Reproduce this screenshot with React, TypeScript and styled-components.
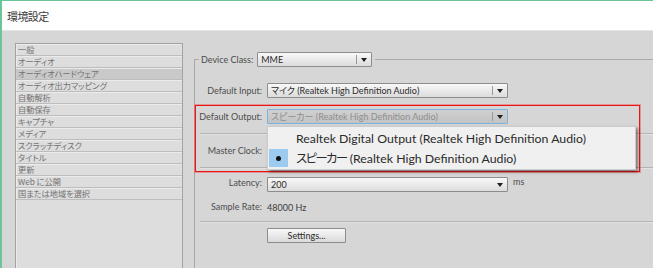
import * as React from "react"
import styled, {createGlobalStyle} from "styled-components"

const GlobalStyles = createGlobalStyle`
  html, body {
    margin: 0;
    padding: 0;
    background: #d6d6d6;
  }
  body {
    font-family: 'Lato', 'Noto Sans CJK JP', sans-serif;
    font-feature-settings: "palt";
  }
`

const sections = [
    "一般",
    "オーディオ",
    "オーディオハードウェア",
    "オーディオ出力マッピング",
    "自動解析",
    "自動保存",
    "キャプチャ",
    "メディア",
    "スクラッチディスク",
    "タイトル",
    "更新",
    "Web に公開",
    "国または地域を選択",
]

export default function App() {
    return (
        <>
            <GlobalStyles/>
            <Window>
                <TitleBar>環境設定</TitleBar>
                <Body>
                    <ListPanel>
                        {sections.map(s => (
                            <ListItem key={s} $selected={s === "オーディオハードウェア"}>{s}</ListItem>
                        ))}
                    </ListPanel>
                    <Group>
                        <Legend>
                            <Label>Device Class:</Label>
                            <Select $width={115} $divider>MME</Select>
                        </Legend>
                        <GroupBody>
                            <Row $top={16}>
                                <Label>Default Input:</Label>
                                <Select $width={241} $divider>マイク (Realtek High Definition Audio)</Select>
                            </Row>
                            <Row $top={11}>
                                <Label>Default Output:</Label>
                                <Anchor>
                                    <Select $width={241} $divider $focused>スピーカー (Realtek High Definition Audio)</Select>
                                    <Menu>
                                        <MenuItem>
                                            <Mark/>
                                            Realtek Digital Output (Realtek High Definition Audio)
                                        </MenuItem>
                                        <MenuItem>
                                            <Mark $on><Dot/></Mark>
                                            <Kana>スピーカー</Kana>&nbsp;(Realtek High Definition Audio)
                                        </MenuItem>
                                    </Menu>
                                </Anchor>
                            </Row>
                            <Separator $top={9}/>
                            <Row $height={33}>
                                <Label>Master Clock:</Label>
                                <Select $width={241}>Out</Select>
                            </Row>
                            <Separator/>
                            <Row $top={9}>
                                <Label $raise>Latency:</Label>
                                <Control>
                                    <Select $width={241}>200</Select>
                                    <Unit>ms</Unit>
                                </Control>
                            </Row>
                            <Row $top={7}>
                                <Label>Sample Rate:</Label>
                                <Value>48000 Hz</Value>
                            </Row>
                            <Separator $top={8}/>
                            <Row $top={6}>
                                <span/>
                                <Button>Settings...</Button>
                            </Row>
                            <Highlight/>
                        </GroupBody>
                    </Group>
                </Body>
            </Window>
        </>
    )
}

type SelectProps = {
    $width: number
    $divider?: boolean
    $focused?: boolean
    children: React.ReactNode
}

const Select = ({$width, $divider, $focused, children}: SelectProps) => (
    <SelectBox $width={$width} $focused={$focused}>
        <SelectText>{children}</SelectText>
        <ArrowArea $divider={$divider}>
            <Arrow/>
        </ArrowArea>
    </SelectBox>
)

const Window = styled.div`
  width: 653px;
  height: 268px;
  box-sizing: border-box;
  overflow: hidden;
  border-top: 1px solid #6cc598;
  border-left: 2px solid #6cc598;
  background: #d6d6d6;
  display: flex;
  flex-direction: column;
`

const TitleBar = styled.div`
  height: 29px;
  flex-shrink: 0;
  background: #ffffff;
  display: flex;
  align-items: center;
  padding-left: 5px;
  font-family: 'Noto Sans CJK JP', sans-serif;
  font-size: 11px;
  letter-spacing: -0.6px;
  color: #3a3a3a;
`

const Body = styled.div`
  flex: 1;
  min-height: 0;
  display: flex;
  gap: 11px;
  border-top: 1px solid #e4e4e4;
  padding: 12px 0 0 13px;
`

const ListPanel = styled.div`
  width: 168px;
  flex-shrink: 0;
  box-sizing: border-box;
  margin-bottom: -10px;
  border: 1px solid #a2a2a2;
  box-shadow: inset 1px 1px 0 #ececec;
  background: #dddddd;
`

const ListItem = styled.div<{ $selected?: boolean }>`
  height: 11px;
  line-height: 11px;
  padding-left: 2px;
  border-bottom: 1px solid #bdbdbd;
  box-shadow: inset 0 1px 0 #ebebeb;
  background: ${p => p.$selected ? "#c9c9c9" : "transparent"};
  font-family: 'Noto Sans CJK JP', sans-serif;
  font-size: 8.2px;
  color: #727272;
  white-space: nowrap;
`

const Group = styled.fieldset`
  flex: 1;
  min-width: 0;
  margin: 9px 0 0 0;
  padding: 0;
  border: none;
  border-top: 1px solid #a9a9a9;
  border-left: 1px solid #a9a9a9;
`

const Legend = styled.legend`
  margin-left: 4px;
  padding: 0 3px 0 2px;
  display: flex;
  align-items: center;
  gap: 4px;
`

const GroupBody = styled.div`
  position: relative;
  display: flex;
  flex-direction: column;
`

const Row = styled.div<{ $top?: number, $height?: number }>`
  display: grid;
  grid-template-columns: 67px auto;
  column-gap: 5px;
  align-items: center;
  justify-content: start;
  margin-top: ${p => p.$top ?? 0}px;
  height: ${p => p.$height ? `${p.$height}px` : "auto"};
`

const Label = styled.span<{ $raise?: boolean }>`
  font-size: 9px;
  color: #4d4d4d;
  text-align: right;
  white-space: nowrap;
  margin-top: ${p => p.$raise ? "-4px" : "0"};
`

const Anchor = styled.div`
  position: relative;
`

const Control = styled.div`
  display: flex;
  align-items: center;
  gap: 5px;
`

const Unit = styled.span`
  font-size: 9px;
  color: #4d4d4d;
  margin-top: -6px;
`

const Value = styled.span`
  font-size: 9px;
  color: #3d3d3d;
  height: 14px;
  line-height: 17px;
`

const SelectBox = styled.div<{ $width: number, $focused?: boolean }>`
  width: ${p => p.$width}px;
  height: 15px;
  box-sizing: border-box;
  display: flex;
  align-items: center;
  padding-left: 3px;
  border: 1px solid ${p => p.$focused ? "#79b2de" : "#8d8d8d"};
  border-radius: 1px;
  background: ${p => p.$focused
    ? "linear-gradient(#d0d0d0, #c3c3c3)"
    : "linear-gradient(#f8f8f8, #dcdcdc)"};
  color: ${p => p.$focused ? "#8e8e8e" : "#2b2b2b"};
  font-size: 9px;
`

const SelectText = styled.span`
  flex: 1;
  white-space: nowrap;
  overflow: hidden;
`

const ArrowArea = styled.div<{ $divider?: boolean }>`
  width: 14px;
  height: 9px;
  display: flex;
  align-items: center;
  justify-content: center;
  border-left: 1px solid ${p => p.$divider ? "#9a9a9a" : "transparent"};
`

const Arrow = styled.span`
  width: 0;
  height: 0;
  border-left: 3px solid transparent;
  border-right: 3px solid transparent;
  border-top: 4px solid #1e1e1e;
`

const Separator = styled.div<{ $top?: number }>`
  height: 1px;
  margin: ${p => p.$top ?? 0}px 0 0 5px;
  background: #b3b3b3;
  box-shadow: 0 1px 0 #e2e2e2;
`

const Button = styled.div`
  width: 79px;
  height: 15px;
  box-sizing: border-box;
  border: 1px solid #8d8d8d;
  border-radius: 1px;
  background: linear-gradient(#f8f8f8, #dadada);
  font-size: 9px;
  color: #2b2b2b;
  display: flex;
  align-items: center;
  justify-content: center;
`

const Menu = styled.div`
  position: absolute;
  top: calc(100% + 2px);
  left: 0;
  width: 369px;
  box-sizing: border-box;
  padding: 1px 0 1px 1px;
  background: #f0f0f0;
  border: 1px solid #cdcdcd;
  box-shadow: 2px 2px 3px rgba(0, 0, 0, 0.45);
  z-index: 2;
`

const MenuItem = styled.div`
  height: 20px;
  display: flex;
  align-items: center;
  font-size: 12.3px;
  color: #2a2a2a;
  white-space: nowrap;
`

const Kana = styled.span`
  letter-spacing: -1.5px;
`

const Mark = styled.span<{ $on?: boolean }>`
  width: 19px;
  height: 18px;
  margin-right: 8px;
  display: flex;
  align-items: center;
  justify-content: center;
  background: ${p => p.$on ? "#9dcbf0" : "transparent"};
`

const Dot = styled.span`
  width: 5px;
  height: 5px;
  border-radius: 50%;
  background: #111111;
`

const Highlight = styled.div`
  position: absolute;
  left: 0;
  top: 38px;
  width: 445px;
  height: 67px;
  box-sizing: border-box;
  border: 1px solid #ec1414;
  box-shadow: 0 0 0 1px rgba(240, 70, 70, 0.45);
  pointer-events: none;
`
